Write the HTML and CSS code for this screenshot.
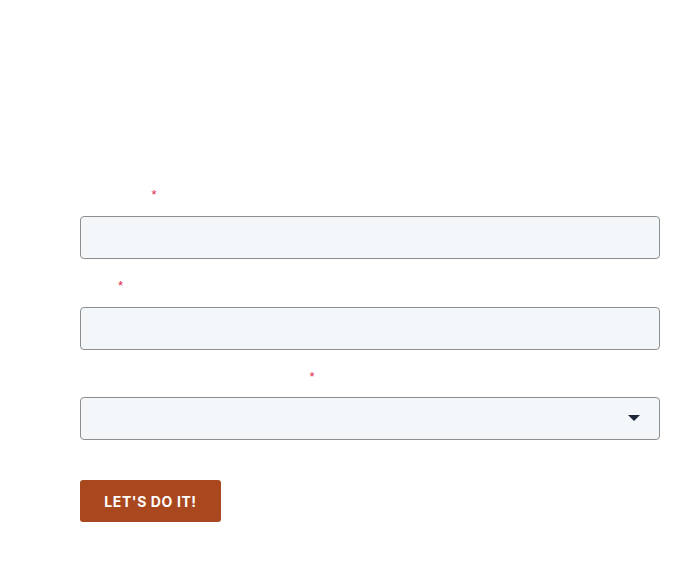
FILE: index.html
```html
<!DOCTYPE html>
<html lang="en">
<head>
<meta charset="utf-8">
<title>Form</title>
<link rel="stylesheet" href="styles.css">
</head>
<body>
<form class="form">
  <div class="field">
    <label class="label" for="name">First Name<span class="req">*</span></label>
    <input class="input" id="name" type="text">
  </div>
  <div class="field">
    <label class="label" for="email">Email<span class="req">*</span></label>
    <input class="input" id="email" type="email">
  </div>
  <div class="field field-tight">
    <label class="label" for="role">What best describes your company?<span class="req">*</span></label>
    <div class="select-wrap">
      <select class="input select" id="role">
        <option value=""></option>
      </select>
      <svg class="caret" width="12" height="6" viewBox="0 0 12 6"><path d="M0 0 L12 0 L6 6 Z" fill="#1d2636"/></svg>
    </div>
  </div>
  <button class="btn" type="button">LET'S DO IT!</button>
</form>
</body>
</html>
```
FILE: styles.css
```css
* { box-sizing: border-box; }
html, body { margin: 0; padding: 0; background: #ffffff; }
body { font-family: "Liberation Sans", Arial, sans-serif; }
.form {
  display: flex;
  flex-direction: column;
  padding: 184px 40px 0 80px;
  width: 700px;
}
.field {
  display: flex;
  flex-direction: column;
  margin-bottom: 16px;
}
.field-tight .label { margin-bottom: 11px; }
.label {
  display: block;
  height: 20px;
  line-height: 20px;
  font-size: 14px;
  color: #ffffff;
  margin-bottom: 12px;
}
.req {
  color: #e0284a;
  font-size: 13px;
  margin-left: 3px;
}
.input {
  display: block;
  width: 580px;
  height: 43px;
  background: #f4f7fa;
  border: 1px solid #8e8e8e;
  border-radius: 4px;
  margin: 0;
  padding: 0 12px;
  font-size: 14px;
  font-family: inherit;
}
.select { appearance: none; -webkit-appearance: none; }
.select-wrap { position: relative; width: 580px; }
.caret { position: absolute; right: 20px; top: 18px; pointer-events: none; }
.btn {
  align-self: flex-start;
  margin-top: 24px;
  height: 42px;
  width: 141px;
  padding: 0;
  border: none;
  border-radius: 3px;
  background: #a9481f;
  color: #ffffff;
  font-family: Inter, "Liberation Sans", Arial, sans-serif;
  font-weight: 700;
  font-size: 14px;
  letter-spacing: 0.6px;
}
```
